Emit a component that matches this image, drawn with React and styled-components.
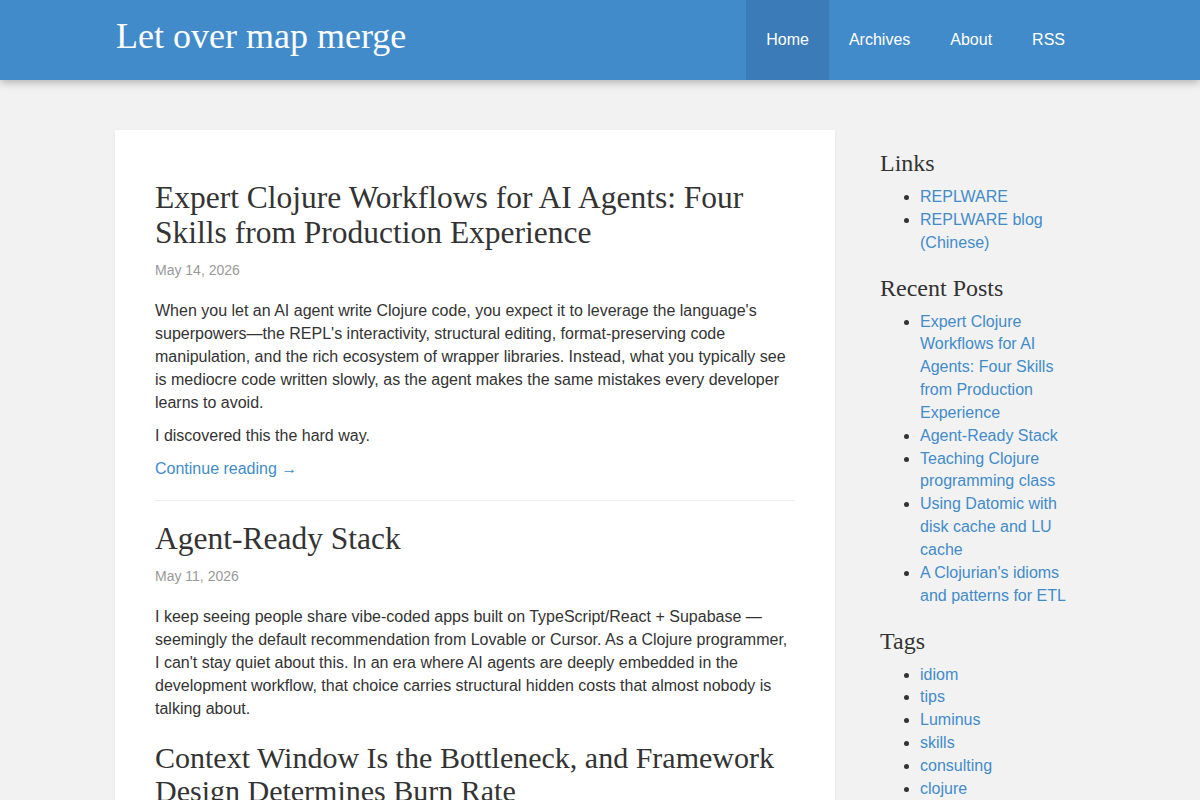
import React from "react";
import styled, { createGlobalStyle } from "styled-components";

const GlobalStyle = createGlobalStyle`
  html, body {
    margin: 0;
    padding: 0;
    background: #f2f2f2;
  }
  body {
    font-family: "Liberation Sans", Arial, sans-serif;
    font-size: 16px;
    line-height: 23px;
    color: #333;
  }
`;

const serif = `"Liberation Serif", "Times New Roman", serif`;

const Header = styled.header`
  height: 80px;
  background: #428bca;
  box-shadow: 0 3px 8px rgba(0, 0, 0, 0.25);
`;

const HeaderInner = styled.div`
  width: 970px;
  margin: 0 auto;
  height: 100%;
  display: flex;
  align-items: stretch;
  justify-content: space-between;
`;

const Brand = styled.a`
  font-family: ${serif};
  font-size: 36px;
  color: #fff;
  text-decoration: none;
  display: flex;
  align-items: center;
  padding-left: 1px;
  padding-bottom: 8px;
`;

const Nav = styled.nav`
  display: flex;
  align-items: stretch;
`;

const NavItem = styled.a`
  display: flex;
  align-items: center;
  padding: 0 20px 2px;
  color: #fff;
  text-decoration: none;
  font-size: 16px;
  background: ${(p) => (p.$active ? "#3b7cb8" : "transparent")};
`;

const Container = styled.div`
  width: 970px;
  margin: 50px auto 0;
  display: grid;
  grid-template-columns: 720px 1fr;
  column-gap: 45px;
  align-items: start;
`;

const Card = styled.main`
  background: #fff;
  padding: 50px 40px 40px;
  box-shadow: 0 1px 4px rgba(0, 0, 0, 0.06);
`;

const Post = styled.article`
  padding-bottom: 20px;
  border-bottom: ${(p) => (p.$last ? "none" : "1px solid #eee")};
  margin-bottom: 20px;
`;

const PostTitle = styled.h2`
  font-family: ${serif};
  font-weight: normal;
  font-size: 31.5px;
  line-height: 35px;
  color: #333;
  margin: 0 0 9px;
`;

const PostDate = styled.div`
  font-size: 14px;
  color: #999;
  margin-bottom: 17px;
`;

const Para = styled.p`
  margin: 0 0 10px;
`;

const SubTitle = styled.h2`
  font-family: ${serif};
  font-weight: normal;
  font-size: 30px;
  line-height: 33px;
  color: #333;
  margin: 21px 0 10px;
`;

const MoreLink = styled.a`
  color: #428bca;
  text-decoration: none;
`;

const Sidebar = styled.aside`
  padding-top: 20px;
`;

const SideHeading = styled.h3`
  font-family: ${serif};
  font-weight: normal;
  font-size: 24px;
  line-height: 26px;
  color: #333;
  margin: 0 0 10px;
`;

const SideList = styled.ul`
  margin: 0 0 20px;
  padding-left: 40px;
`;

const SideItem = styled.li`
  line-height: 1.428571;
  a {
    color: #428bca;
    text-decoration: none;
  }
`;

const links = ["REPLWARE", "REPLWARE blog (Chinese)"];
const recent = [
  "Expert Clojure Workflows for AI Agents: Four Skills from Production Experience",
  "Agent-Ready Stack",
  "Teaching Clojure programming class",
  "Using Datomic with disk cache and LU cache",
  "A Clojurian's idioms and patterns for ETL",
];
const tags = ["idiom", "tips", "Luminus", "skills", "consulting", "clojure"];

function SideSection({ title, items }) {
  return (
    <>
      <SideHeading>{title}</SideHeading>
      <SideList>
        {items.map((t) => (
          <SideItem key={t}>
            <a href="#">{t}</a>
          </SideItem>
        ))}
      </SideList>
    </>
  );
}

export default function App() {
  return (
    <>
      <GlobalStyle />
      <Header>
        <HeaderInner>
          <Brand href="#">Let over map merge</Brand>
          <Nav>
            <NavItem href="#" $active>Home</NavItem>
            <NavItem href="#">Archives</NavItem>
            <NavItem href="#">About</NavItem>
            <NavItem href="#">RSS</NavItem>
          </Nav>
        </HeaderInner>
      </Header>
      <Container>
        <Card>
          <Post>
            <PostTitle>
              Expert Clojure Workflows for AI Agents: Four Skills from Production Experience
            </PostTitle>
            <PostDate>May 14, 2026</PostDate>
            <Para>
              When you let an AI agent write Clojure code, you expect it to leverage the
              language's superpowers—the REPL's interactivity, structural editing,
              format-preserving code manipulation, and the rich ecosystem of wrapper
              libraries. Instead, what you typically see is mediocre code written slowly, as
              the agent makes the same mistakes every developer learns to avoid.
            </Para>
            <Para>I discovered this the hard way.</Para>
            <MoreLink href="#">Continue reading →</MoreLink>
          </Post>
          <Post $last>
            <PostTitle>Agent-Ready Stack</PostTitle>
            <PostDate>May 11, 2026</PostDate>
            <Para>
              I keep seeing people share vibe-coded apps built on TypeScript/React + Supabase
              — seemingly the default recommendation from Lovable or Cursor. As a Clojure
              programmer, I can't stay quiet about this. In an era where AI agents are deeply
              embedded in the development workflow, that choice carries structural hidden
              costs that almost nobody is talking about.
            </Para>
            <SubTitle>
              Context Window Is the Bottleneck, and Framework Design Determines Burn Rate
            </SubTitle>
          </Post>
        </Card>
        <Sidebar>
          <SideSection title="Links" items={links} />
          <SideSection title="Recent Posts" items={recent} />
          <SideSection title="Tags" items={tags} />
        </Sidebar>
      </Container>
    </>
  );
}
